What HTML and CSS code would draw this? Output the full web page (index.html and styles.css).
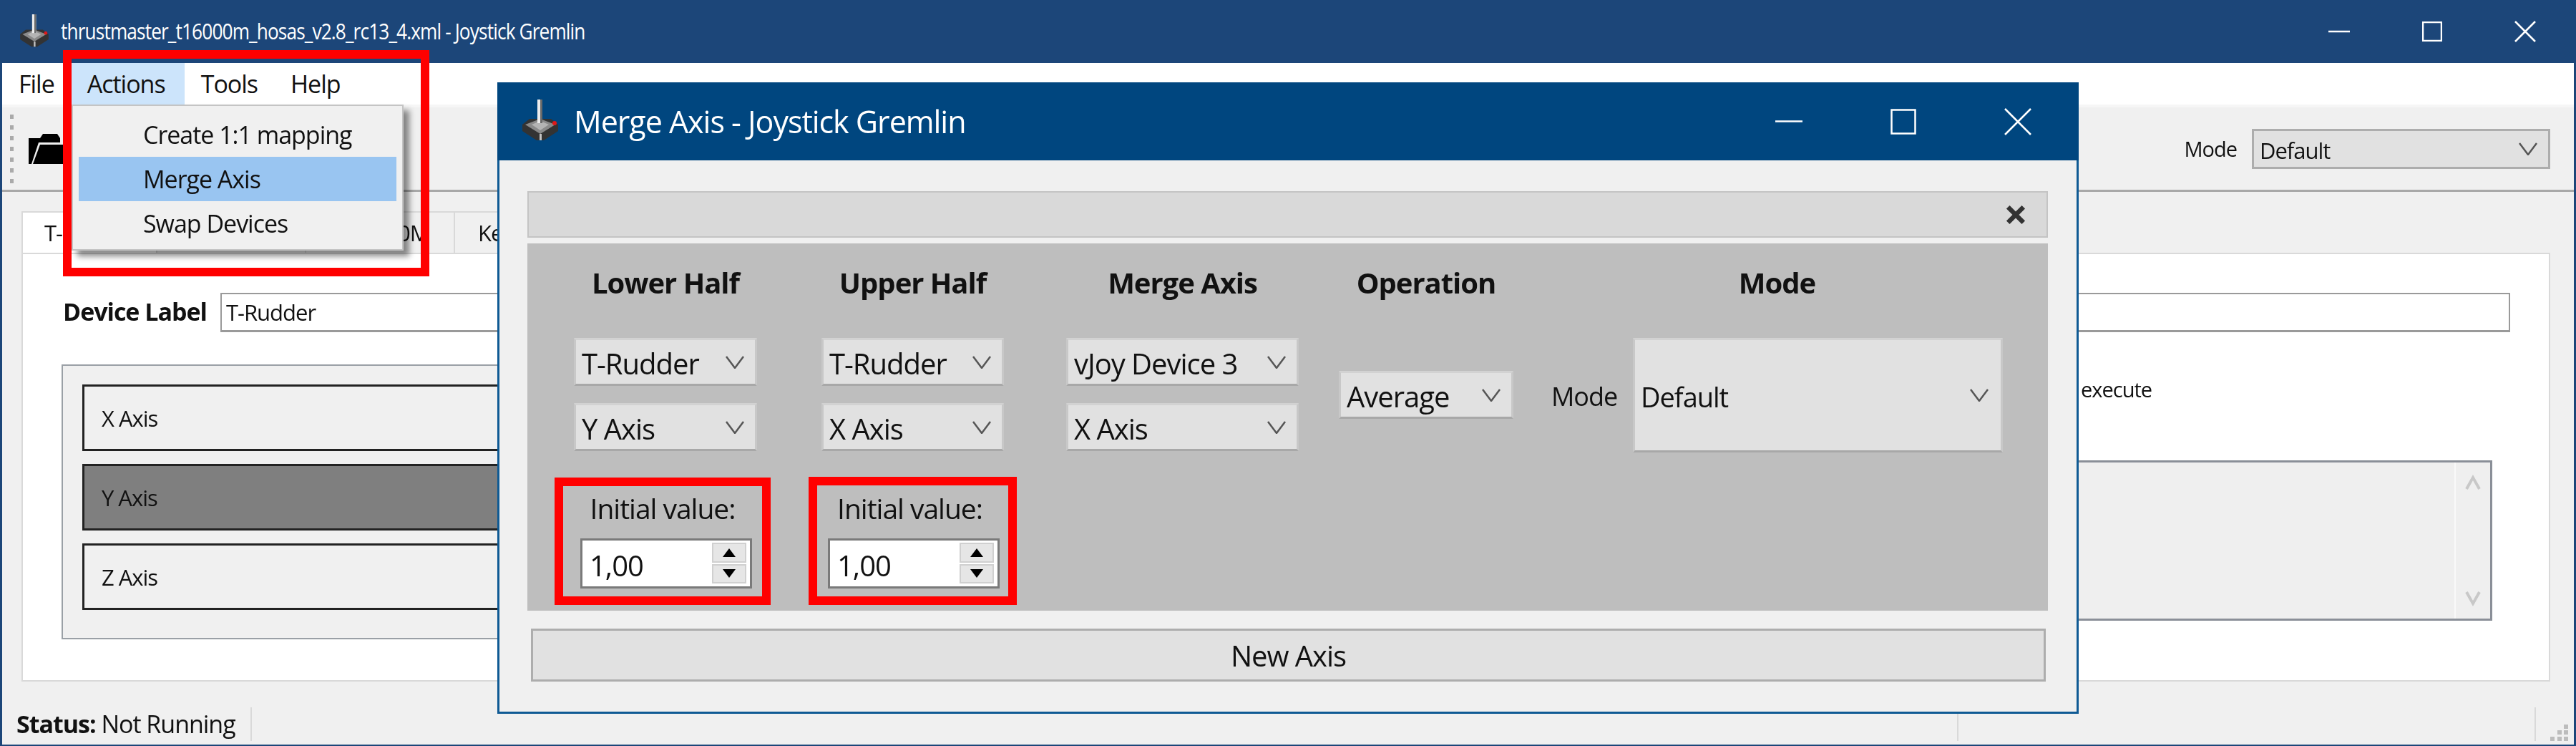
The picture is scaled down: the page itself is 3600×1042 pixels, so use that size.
FILE: index.html
```html
<!DOCTYPE html>
<html>
	<head>
		<meta charset="utf-8">
		<title>Joystick Gremlin</title>
		<link rel="stylesheet" href="styles.css">
	</head>
	<body>
		<div class="window">
			<div class="titlebar">
				<svg class="app_icon" viewBox="0 0 50 58"><path d="M10 27h30l10 8v9L30 57H20L0 44v-9z" fill="#333"/><path d="M25 27l21 8-21 13L4 35z" fill="#8a8a8a"/><path d="M25 30l12 5-12 8-12-8z" fill="#b4b4b4"/><path d="M24 48h3v9h-3z" fill="#c4c4c4"/><path d="M21 0h7v33h-7z" fill="#ececec"/><path d="M25 0h3v33h-3z" fill="#6a6a6a"/><circle cx="45" cy="33" r="3" fill="#e01818"/></svg>
				<span class="title_text">thrustmaster_t16000m_hosas_v2.8_rc13_4.xml - Joystick Gremlin</span>
				<span class="win_btn"><svg class="win_min" viewBox="0 0 30 4"><path d="M0 2h30"/></svg></span>
				<span class="win_btn"><svg class="win_max" viewBox="0 0 28 28"><path d="M1 1h26v26H1z"/></svg></span>
				<span class="win_btn"><svg class="win_close" viewBox="0 0 30 30"><path d="M1 1l28 28M29 1L1 29"/></svg></span>
			</div>
			<div class="menubar">
				<span class="menu_item">File</span>
				<span class="menu_item menu_open">Actions</span>
				<span class="menu_item">Tools</span>
				<span class="menu_item">Help</span>
			</div>
			<div class="toolbar">
				<span class="tool_handle"></span>
				<svg class="folder" viewBox="0 0 60 42"><path d="M0 6h16l4-6h20l4 6v6H14L4 42H0z"/><path d="M16 15h44L48 42H6z"/></svg>
				<span class="tool_mode">Mode</span>
				<div class="combo combo_tool"><span>Default</span><svg class="chevron" viewBox="0 0 26 18"><path d="M1 1l12 16L25 1"/></svg></div>
			</div>
			<div class="tabs">
				<div class="tab_strip">
					<span class="tab tab_on">T-Rudder</span>
					<span class="tab">T.16000M</span>
					<span class="tab">T.16000M</span>
					<span class="tab">Keyboard</span>
				</div>
				<div class="tab_pane">
					<div class="device_row">
						<span class="device_label">Device Label</span>
						<div class="device_input">T-Rudder</div>
					</div>
					<div class="device_main">
						<div class="axis_group">
							<div class="axis_row">X Axis</div>
							<div class="axis_row axis_on">Y Axis</div>
							<div class="axis_row">Z Axis</div>
						</div>
						<div class="side">
							<div class="always">Always execute</div>
							<div class="side_box">
								<div class="side_scroll">
									<svg class="scroll_arrow" viewBox="0 0 22 24"><path d="M2 21L11 5l9 16"/></svg>
									<svg class="scroll_arrow" viewBox="0 0 22 24"><path d="M2 3l9 16 9-16"/></svg>
								</div>
							</div>
						</div>
					</div>
				</div>
			</div>
			<div class="statusbar">
				<div class="status_cell status_first"><b>Status:</b> Not Running</div>
				<div class="status_cell status_mid"></div>
				<div class="status_cell status_last"></div>
				<svg class="grip" viewBox="0 0 30 26"><path d="M21 2h6v6h-6zM12 10h6v6h-6zM21 10h6v6h-6zM2 19h6v6H2zM12 19h6v6h-6zM21 19h6v6h-6z"/></svg>
			</div>
		</div>

		<div class="actions_menu">
			<div class="drop_item">Create 1:1 mapping</div>
			<div class="drop_item drop_on">Merge Axis</div>
			<div class="drop_item">Swap Devices</div>
		</div>

		<div class="dialog">
			<div class="dialog_title">
				<svg class="dialog_icon" viewBox="0 0 50 58"><path d="M10 27h30l10 8v9L30 57H20L0 44v-9z" fill="#333"/><path d="M25 27l21 8-21 13L4 35z" fill="#8a8a8a"/><path d="M25 30l12 5-12 8-12-8z" fill="#b4b4b4"/><path d="M24 48h3v9h-3z" fill="#c4c4c4"/><path d="M21 0h7v33h-7z" fill="#ececec"/><path d="M25 0h3v33h-3z" fill="#6a6a6a"/><circle cx="45" cy="33" r="3" fill="#e01818"/></svg>
				<span class="dialog_text">Merge Axis - Joystick Gremlin</span>
				<span class="dlg_btn"><svg class="dlg_min" viewBox="0 0 38 5"><path d="M0 2.5h38"/></svg></span>
				<span class="dlg_btn"><svg class="dlg_max" viewBox="0 0 36 36"><path d="M1.5 1.5h33v33h-33z"/></svg></span>
				<span class="dlg_btn"><svg class="dlg_close" viewBox="0 0 38 38"><path d="M1 1l36 36M37 1L1 37"/></svg></span>
			</div>
			<div class="dialog_body">
				<div class="entry_head"><svg class="entry_close" viewBox="0 0 26 26"><path d="M3 3l20 20M23 3L3 23"/></svg></div>
				<div class="merge_panel">
					<div class="col col_lower">
						<div class="col_head">Lower Half</div>
						<div class="combo"><span>T-Rudder</span><svg class="chevron" viewBox="0 0 26 18"><path d="M1 1l12 16L25 1"/></svg></div>
						<div class="combo combo_second"><span>Y Axis</span><svg class="chevron" viewBox="0 0 26 18"><path d="M1 1l12 16L25 1"/></svg></div>
						<div class="init_label">Initial value:</div>
						<div class="spin"><span class="spin_text">1,00</span><span class="spin_btns"><i class="spin_up"></i><i class="spin_down"></i></span></div>
					</div>
					<div class="col col_upper">
						<div class="col_head">Upper Half</div>
						<div class="combo"><span>T-Rudder</span><svg class="chevron" viewBox="0 0 26 18"><path d="M1 1l12 16L25 1"/></svg></div>
						<div class="combo combo_second"><span>X Axis</span><svg class="chevron" viewBox="0 0 26 18"><path d="M1 1l12 16L25 1"/></svg></div>
						<div class="init_label">Initial value:</div>
						<div class="spin"><span class="spin_text">1,00</span><span class="spin_btns"><i class="spin_up"></i><i class="spin_down"></i></span></div>
					</div>
					<div class="col col_merge">
						<div class="col_head">Merge Axis</div>
						<div class="combo"><span>vJoy Device 3</span><svg class="chevron" viewBox="0 0 26 18"><path d="M1 1l12 16L25 1"/></svg></div>
						<div class="combo combo_second"><span>X Axis</span><svg class="chevron" viewBox="0 0 26 18"><path d="M1 1l12 16L25 1"/></svg></div>
					</div>
					<div class="col col_oper">
						<div class="col_head">Operation</div>
						<div class="col_mid">
							<div class="combo"><span>Average</span><svg class="chevron" viewBox="0 0 26 18"><path d="M1 1l12 16L25 1"/></svg></div>
						</div>
					</div>
					<div class="col col_mode">
						<div class="col_head">Mode</div>
						<div class="col_mid">
							<span class="mode_label">Mode</span>
							<div class="combo combo_mode"><span>Default</span><svg class="chevron" viewBox="0 0 26 18"><path d="M1 1l12 16L25 1"/></svg></div>
						</div>
					</div>
				</div>
				<div class="new_axis">New Axis</div>
			</div>
		</div>

		<div class="mark mark_menu"></div>
		<div class="mark mark_lower"></div>
		<div class="mark mark_upper"></div>
	</body>
</html>
```

FILE: styles.css
```css
*{
	box-sizing:border-box;
}

body{
	margin:0;
	width:3600px;
	height:1042px;
	position:relative;
	overflow:hidden;
	background:#f0f0f0;
	color:#111;
	font-family:"Open Sans",sans-serif;
	font-size:34px;
	letter-spacing:-0.03em;
}

svg{
	display:block;
	fill:none;
}

/* the reference is an upscaled capture, so everything is a little soft */
.window,.actions_menu,.dialog{
	filter:blur(0.7px);
}

/* main window */
.window{
	width:3600px;
	height:1042px;
	display:flex;
	flex-direction:column;
	border:solid #1c4679;
	border-width:0 3px 2px;
}

.titlebar{
	height:88px;
	display:flex;
	align-items:center;
	padding-right:3px;
	background:#1c4679;
	color:#fff;
	flex:none;
}

.app_icon{
	width:40px;
	height:46px;
	margin-left:25px;
	margin-top:-2px;
}

.title_text{
	flex:1;
	margin-left:17px;
	margin-top:-2px;
	font-size:31px;
	transform:scaleX(0.846);
	transform-origin:left center;
}

.win_btn{
	width:130px;
	height:88px;
	display:flex;
	align-items:center;
	justify-content:center;
}

.win_min{
	width:30px;
	height:4px;
}

.win_max{
	width:28px;
	height:28px;
}

.win_close{
	width:30px;
	height:30px;
}

.win_min path,.win_max path,.win_close path,.dlg_min path,.dlg_max path,.dlg_close path{
	stroke:#fff;
	stroke-width:2.5;
}

.menubar{
	height:62px;
	flex:none;
	display:flex;
	align-items:stretch;
	background:#fff;
	border-bottom:4px solid #f6f6f6;
}

.menu_item{
	display:flex;
	align-items:center;
	padding:0 23px;
}

.menu_open{
	width:159px;
	background:#cce4fb;
}

.toolbar{
	height:118px;
	flex:none;
	display:flex;
	align-items:center;
	border-bottom:3px solid #a8a8a8;
}

.tool_handle{
	width:5px;
	height:96px;
	margin-left:11px;
	background:repeating-linear-gradient(to bottom,#aaa 0,#aaa 6px,transparent 6px,transparent 15px);
}

.folder{
	width:60px;
	height:42px;
	margin-left:21px;
}

.folder path{
	fill:#000;
}

.tool_mode{
	margin-left:auto;
	margin-right:21px;
	font-size:29px;
}

.combo{
	height:67px;
	display:flex;
	align-items:center;
	justify-content:space-between;
	padding:4px 15px 0 8px;
	background:#e1e1e1;
	border:3px solid #adadad;
	border-color:#d2d2d2 #c8c8c8 #a8a8a8 #c8c8c8;
}

.combo .chevron{
	margin-top:-4px;
}

.combo_tool{
	width:417px;
	height:56px;
	margin-right:33px;
	border-color:#adadad;
	font-size:31px;
}

.chevron{
	width:26px;
	height:18px;
}

.chevron path{
	stroke:#555;
	stroke-width:2.5;
}

/* tabs */
.tabs{
	flex:none;
	padding:27px 33px 0 27px;
}

.tab_strip{
	height:58px;
	display:flex;
}

.tab{
	width:208px;
	display:flex;
	align-items:center;
	padding-left:38px;
	background:#f0f0f0;
	border:solid #d9d9d9;
	border-width:2px 2px 0 0;
	font-size:31px;
}

.tab_on{
	width:190px;
	padding-left:30px;
	background:#fff;
	border-width:2px 2px 0;
}

.tab:last-child{
	padding-left:32px;
}

.tab_pane{
	height:599px;
	padding:54px 54px 0;
	background:#fff;
	border:2px solid #d9d9d9;
}

.device_row{
	height:55px;
	display:flex;
	align-items:center;
}

.device_label{
	width:220px;
	margin-left:2px;
	margin-top:-4px;
	font-weight:700;
}

.device_input{
	flex:1;
	height:55px;
	line-height:51px;
	padding-left:6px;
	border:2px solid #9a9a9a;
	border-bottom-width:3px;
	font-size:31px;
}

.device_main{
	display:flex;
	justify-content:space-between;
	margin-top:45px;
}

.axis_group{
	width:1500px;
	height:384px;
	padding:26px 27px 0;
	display:flex;
	flex-direction:column;
	gap:18px;
	background:#f0f0f0;
	border:2px solid #9aa0a6;
}

.axis_row{
	height:93px;
	display:flex;
	align-items:center;
	padding-left:24px;
	border:3px solid #222;
	font-size:31px;
}

.axis_on{
	background:#7f7f7f;
}

.side{
	width:1800px;
	margin-right:25px;
}

.always{
	width:1324px;
	height:70px;
	line-height:70px;
	text-align:right;
	font-size:29px;
}

.side_box{
	height:224px;
	margin-top:64px;
	display:flex;
	justify-content:flex-end;
	background:#efefef;
	border:3px solid #8a8f98;
}

.side_scroll{
	width:50px;
	display:flex;
	flex-direction:column;
	align-items:center;
	justify-content:space-between;
	padding:16px 0;
	border-left:2px solid #f9f9f9;
}

.scroll_arrow{
	width:22px;
	height:24px;
}

.scroll_arrow path{
	stroke:#c8c8c8;
	stroke-width:4;
}

/* status bar */
.statusbar{
	flex:1;
	display:flex;
	align-items:flex-end;
	position:relative;
}

.status_cell{
	height:47px;
	margin-bottom:5px;
	border-right:2px solid #d9d9d9;
}

.status_first{
	width:349px;
	padding-left:20px;
	line-height:46px;
}

.status_mid{
	width:2385px;
}

.status_last{
	width:807px;
}

.grip{
	width:30px;
	height:26px;
	margin:0 0 4px 18px;
}

.grip path{
	fill:#bcbcbc;
}

/* Actions drop-down */
.actions_menu{
	position:absolute;
	left:100px;
	top:146px;
	width:464px;
	height:204px;
	padding:9px 8px;
	background:#f0f0f0;
	border:2px solid #c4c4c4;
	box-shadow:8px 8px 8px rgba(0,0,0,0.45);
}

.drop_item{
	height:62px;
	display:flex;
	align-items:center;
	padding-left:90px;
}

.drop_on{
	background:#99c5f1;
}

/* merge axis dialog */
.dialog{
	position:absolute;
	left:695px;
	top:115px;
	width:2210px;
	height:882px;
	background:#f0f0f0;
	border:solid #0f5a94;
	border-width:0 3px 3px;
	font-size:40px;
}

.dialog_title{
	height:109px;
	margin:0 -3px;
	padding-right:5px;
	display:flex;
	align-items:center;
	background:#00467f;
	color:#fff;
}

.dialog_icon{
	width:50px;
	height:58px;
	margin-left:35px;
	margin-top:-3px;
}

.dialog_text{
	flex:1;
	margin-left:22px;
	font-size:43px;
}

.dlg_btn{
	width:160px;
	height:109px;
	display:flex;
	align-items:center;
	justify-content:center;
}

.dlg_min{
	width:38px;
	height:5px;
}

.dlg_max{
	width:36px;
	height:36px;
}

.dlg_close{
	width:38px;
	height:38px;
}

.dialog_body{
	padding:43px 40px 0 39px;
}

.entry_head{
	height:65px;
	display:flex;
	align-items:center;
	justify-content:flex-end;
	padding-right:29px;
	background:#d9d9d9;
	border:2px solid #c4c4c4;
}

.entry_close{
	width:28px;
	height:28px;
}

.entry_close path{
	stroke:#333;
	stroke-width:6;
}

.merge_panel{
	height:513px;
	margin-top:8px;
	padding-top:30px;
	display:flex;
	background:#bebebe;
}

.col{
	display:flex;
	flex-direction:column;
}

.col_lower{
	width:256px;
	margin-left:65px;
}

.col_upper{
	width:255px;
	margin-left:90px;
}

.col_merge{
	width:325px;
	margin-left:87px;
}

.col_oper{
	width:244px;
	margin-left:56px;
}

.col_mode{
	width:631px;
	margin-left:53px;
}

.col_head{
	height:50px;
	line-height:50px;
	margin-bottom:52px;
	text-align:center;
	font-weight:700;
}

.combo_second{
	margin-top:24px;
}

.col_mid{
	height:159px;
	display:flex;
	align-items:center;
}

.col_oper .combo{
	width:100%;
}

.mode_label{
	width:114px;
	padding-top:4px;
	font-size:36px;
}

.combo_mode{
	width:517px;
	height:160px;
	padding-right:17px;
	font-size:38px;
}

.init_label{
	height:50px;
	line-height:50px;
	margin-top:55px;
	text-align:center;
	padding-right:8px;
	font-size:39px;
}

.spin{
	width:240px;
	height:70px;
	margin:17px 0 0 9px;
	display:flex;
	justify-content:space-between;
	padding:3px 5px 4px 10px;
	background:#fff;
	border:3px solid #7a7a7a;
}

.spin_text{
	line-height:64px;
}

.spin_btns{
	width:48px;
	display:flex;
	flex-direction:column;
	gap:2px;
}

.spin_up,.spin_down{
	flex:1;
	display:flex;
	align-items:center;
	justify-content:center;
	background:#e6e6e6;
	border:2px solid #d0d0d0;
}

.spin_up::after{
	content:"";
	border:solid transparent;
	border-width:0 9px 12px;
	border-bottom-color:#000;
}

.spin_down::after{
	content:"";
	border:solid transparent;
	border-width:12px 9px 0;
	border-top-color:#000;
}

.new_axis{
	height:74px;
	margin:25px 3px 0 5px;
	line-height:70px;
	text-align:center;
	background:#e1e1e1;
	border:3px solid #adadad;
}

/* red marks drawn over the screenshot */
.mark{
	position:absolute;
	border:12px solid #f00;
}

.mark_menu{
	left:88px;
	top:70px;
	width:512px;
	height:316px;
}

.mark_lower{
	left:775px;
	top:667px;
	width:302px;
	height:178px;
}

.mark_upper{
	left:1130px;
	top:666px;
	width:291px;
	height:179px;
}
```
